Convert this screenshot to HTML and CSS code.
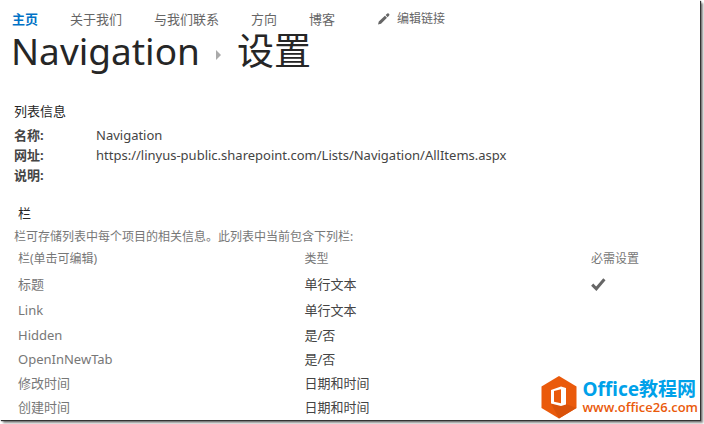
FILE: index.html
```html
<!DOCTYPE html>
<html lang="zh-CN">
<head>
<meta charset="utf-8">
<title>Navigation 设置</title>
<link rel="stylesheet" href="styles.css">
</head>
<body>
<div class="page">
  <nav class="topnav">
    <a class="current" href="#">主页</a>
    <a href="#">关于我们</a>
    <a href="#">与我们联系</a>
    <a href="#">方向</a>
    <a href="#">博客</a>
    <a class="edit" href="#">
      <svg width="12" height="12" viewBox="0 0 12 12" aria-hidden="true"><path d="M0 11.500 .8 8.500 6.900 2.700 9 4.800 3 10.800zM7.600 2.100 9.300.5Q10.200 0 11 .8 11.800 1.600 11.200 2.500L9.600 4.200z"/></svg>
      编辑链接
    </a>
  </nav>
  <h1 class="title">
    <span>Navigation</span>
    <svg width="5" height="10" viewBox="0 0 5 10" aria-hidden="true"><path d="M0 0 5 5 0 10z"/></svg>
    <span>设置</span>
  </h1>
  <main>
    <section class="info">
      <h2>列表信息</h2>
      <dl>
        <dt>名称:</dt><dd>Navigation</dd>
        <dt>网址:</dt><dd>https://linyus-public.sharepoint.com/Lists/Navigation/AllItems.aspx</dd>
        <dt>说明:</dt><dd></dd>
      </dl>
    </section>
    <section class="columns">
      <h2>栏</h2>
      <p>栏可存储列表中每个项目的相关信息。此列表中当前包含下列栏:</p>
      <table>
        <thead>
          <tr><th>栏(单击可编辑)</th><th>类型</th><th>必需设置</th></tr>
        </thead>
        <tbody>
          <tr class="tall"><td><a href="#">标题</a></td><td>单行文本</td><td><svg class="check" width="15" height="13" viewBox="0 0 15 13" role="img" aria-label="是"><path d="M1.200 6.600 5.300 10.800 13.400 1.200"/></svg></td></tr>
          <tr class="tall"><td><a href="#">Link</a></td><td>单行文本</td><td></td></tr>
          <tr><td><a href="#">Hidden</a></td><td>是/否</td><td></td></tr>
          <tr><td><a href="#">OpenInNewTab</a></td><td>是/否</td><td></td></tr>
          <tr><td><a href="#">修改时间</a></td><td>日期和时间</td><td></td></tr>
          <tr><td><a href="#">创建时间</a></td><td>日期和时间</td><td></td></tr>
        </tbody>
      </table>
    </section>
  </main>
  <aside class="brand">
    <svg width="36" height="44" viewBox="0 0 36 44" aria-hidden="true">
      <path fill="#ea5a0b" d="M18 1 35.500 11.500V33L18 43.500 .5 33V11.500z"/>
      <path fill="#d9520a" d="M10 28.500 20 31 25 29 35.500 33 18 43.500z"/>
      <path fill="#fff" fill-rule="evenodd" d="M10 15 20 11.500 25 13V29.500L20 31 10 28.500zM13 16V26.800L20 28.300V14.200z"/>
    </svg>
    <div>
      <strong>Office教程网</strong>
      <a href="#">www.office26.com</a>
    </div>
  </aside>
</div>
</body>
</html>
```
FILE: styles.css
```css
* {
  box-sizing: border-box;
}

body {
  margin: 0;
  background: #fff;
  color: #444;
  font: 13px/20px "Noto Sans", "Noto Sans CJK SC", sans-serif;
}

a {
  color: inherit;
  text-decoration: none;
}

h1, h2, p, dl, dd {
  margin: 0;
  font-weight: 400;
}

.page {
  position: relative;
  min-height: calc(100vh - 4px);
  margin: 0 4px 4px 0;
  padding-top: 9px;
  background: #fff;
  box-shadow: 1px 1px 1px #333, 3px 3px 2px #888;
}

.topnav {
  display: flex;
  gap: 32px;
  padding-left: 12px;
  color: #666;
}

.topnav .current {
  color: #0072c6;
  font-weight: 700;
}

.topnav .edit {
  display: flex;
  align-items: center;
  gap: 7px;
  margin-left: 11px;
  font-size: 12px;
}

.edit svg {
  fill: #666;
}

.title {
  display: flex;
  align-items: center;
  padding-left: 11px;
  color: #262626;
  font-size: 37px;
  line-height: 44px;
}

.title svg {
  margin: 8px 16px 0;
  fill: #aaa;
}

main {
  padding: 28px 4px 0 14px;
}

h2 {
  color: #262626;
  font-size: 13px;
}

.info dl {
  display: grid;
  grid-template-columns: 82px 1fr;
  grid-auto-rows: 20px;
  padding-top: 4px;
}

.info dt {
  font-weight: 700;
}

.columns {
  padding-top: 18px;
}

.columns h2 {
  padding-left: 4px;
}

.columns p {
  padding-top: 4px;
  color: #777;
  font-size: 12px;
}

table {
  width: 100%;
  table-layout: fixed;
  border-collapse: collapse;
}

th, td {
  height: 24px;
  padding: 0 0 0 4px;
  text-align: left;
  vertical-align: middle;
}

th {
  width: 42%;
  color: #777;
  font-size: 12px;
  font-weight: 400;
}

th:last-child {
  width: 16%;
}

td a {
  color: #777;
}

.tall td {
  height: 26px;
}

.check {
  display: block;
  fill: none;
  stroke: #666;
  stroke-width: 3;
}

.brand {
  position: absolute;
  right: 2px;
  bottom: 1px;
  display: flex;
  align-items: center;
  gap: 6px;
}

.brand strong, .brand a {
  display: block;
}

.brand strong {
  color: #00a1e9;
  font-size: 19px;
  line-height: 20px;
}

.brand a {
  color: #ea5a0b;
  font-family: "Open Sans", sans-serif;
  font-size: 13px;
  font-weight: 600;
  line-height: 16px;
}
```
